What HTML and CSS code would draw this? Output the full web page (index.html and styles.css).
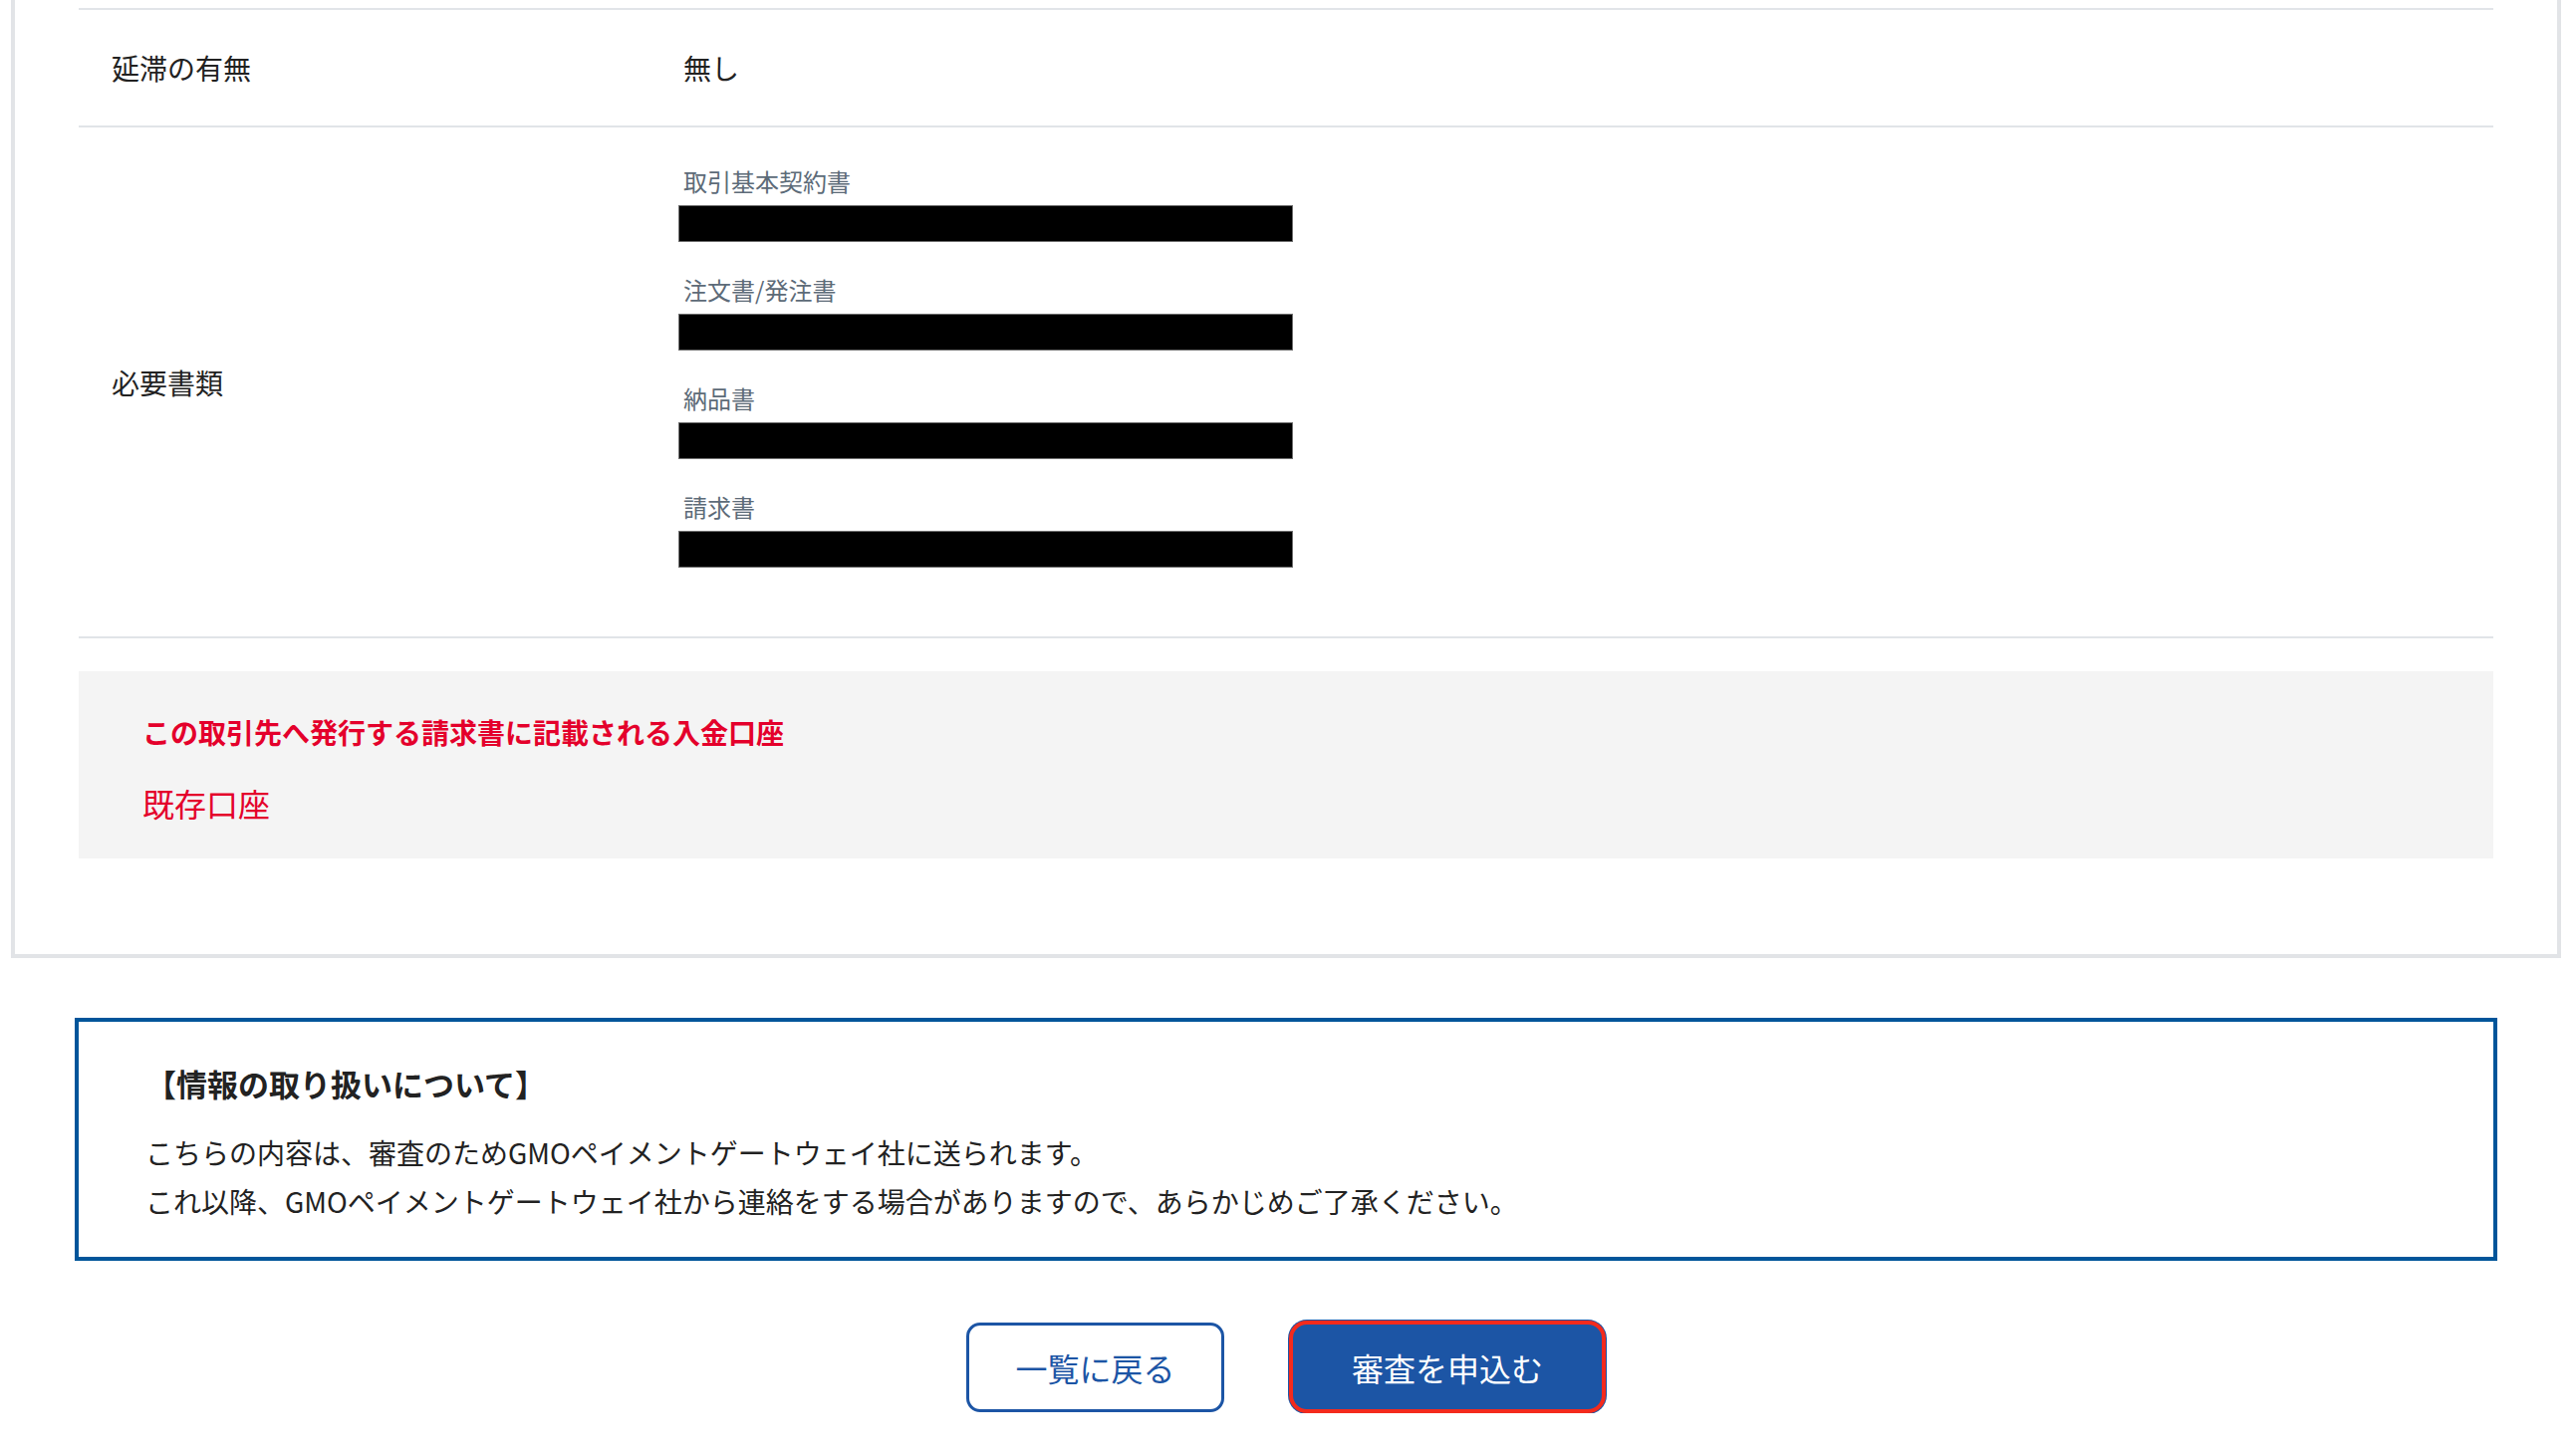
FILE: index.html
```html
<!DOCTYPE html>
<html lang="ja">
<head>
<meta charset="utf-8">
<title>審査申込</title>
<link rel="stylesheet" href="styles.css">
</head>
<body>
<div class="page">
  <section class="card">
    <div class="row row-first">
      <div class="row-label">延滞の有無</div>
      <div class="row-value">無し</div>
    </div>
    <div class="row">
      <div class="row-label">必要書類</div>
      <div class="row-value docs">
        <div class="doc">
          <div class="doc-label">取引基本契約書</div>
          <div class="doc-file"></div>
        </div>
        <div class="doc">
          <div class="doc-label">注文書/発注書</div>
          <div class="doc-file"></div>
        </div>
        <div class="doc">
          <div class="doc-label">納品書</div>
          <div class="doc-file"></div>
        </div>
        <div class="doc">
          <div class="doc-label">請求書</div>
          <div class="doc-file"></div>
        </div>
      </div>
    </div>
    <div class="account">
      <div class="account-title">この取引先へ発行する請求書に記載される入金口座</div>
      <div class="account-value">既存口座</div>
    </div>
  </section>

  <section class="notice">
    <h2 class="notice-title">【情報の取り扱いについて】</h2>
    <p class="notice-text">こちらの内容は、審査のためGMOペイメントゲートウェイ社に送られます。<br>これ以降、GMOペイメントゲートウェイ社から連絡をする場合がありますので、あらかじめご了承ください。</p>
  </section>

  <div class="actions">
    <button class="btn btn-back" type="button">一覧に戻る</button>
    <button class="btn btn-submit" type="button">審査を申込む</button>
  </div>
</div>
</body>
</html>
```

FILE: styles.css
```css
* {
  box-sizing: border-box;
}

html, body {
  margin: 0;
  padding: 0;
  background: #ffffff;
}

body {
  font-family: "Noto Sans CJK JP", "Noto Sans", sans-serif;
  color: #222222;
  padding-left: 11px;
}

.page {
  width: 2560px;
}

.card {
  border: 4px solid #e2e4e7;
  border-top: none;
  padding: 8px 64px 96px 64px;
  background: #ffffff;
}

.row {
  display: grid;
  grid-template-columns: 607px 1fr;
  align-items: center;
  border-bottom: 2px solid #e1e4e8;
}

.row-first {
  border-top: 2px solid #e1e4e8;
  min-height: 120px;
}

.row-label {
  padding-left: 33px;
  font-size: 28px;
  line-height: 40px;
  color: #222222;
}

.row-value {
  font-size: 28px;
  line-height: 40px;
  color: #222222;
}

.docs {
  display: flex;
  flex-direction: column;
  gap: 30px;
  padding: 36px 0 69px 0;
}

.doc {
  display: flex;
  flex-direction: column;
  gap: 6px;
}

.doc-label {
  font-size: 24px;
  line-height: 36px;
  color: #5d6b78;
}

.doc-file {
  width: 617px;
  height: 37px;
  margin-left: -5px;
  background: #000000;
  border: 1px solid #6e6e6e;
}

.account {
  margin-top: 33px;
  background: #f4f4f4;
  padding: 41px 64px 34px 64px;
  color: #e4002b;
}

.account-title {
  font-size: 28px;
  line-height: 40px;
  font-weight: 700;
}

.account-value {
  margin-top: 29px;
  font-size: 32px;
  line-height: 44px;
}

.notice {
  margin: 60px 64px 0 64px;
  border: 4px solid #00559a;
  padding: 40px 66px 31px 67px;
}

.notice-title {
  margin: 0;
  font-size: 31px;
  line-height: 44px;
  font-weight: 700;
  color: #222222;
}

.notice-text {
  margin: 23px 0 0 0;
  font-size: 28px;
  line-height: 49px;
  color: #222222;
}

.actions {
  display: flex;
  justify-content: center;
  align-items: center;
  gap: 65px;
  margin-top: 60px;
}

.btn {
  font-family: "Noto Sans CJK JP", "Noto Sans", sans-serif;
  font-size: 32px;
  line-height: 40px;
  cursor: pointer;
  padding: 0;
}

.btn-back {
  width: 259px;
  height: 90px;
  background: #ffffff;
  color: #1c55a5;
  border: 3px solid #1c55a5;
  border-radius: 14px;
}

.btn-submit {
  width: 318px;
  height: 93px;
  background: #1c55a5;
  color: #ffffff;
  border: 4px solid #f42a1c;
  border-radius: 18px;
  box-shadow: 0 0 0 1px #1c55a5;
}
```
